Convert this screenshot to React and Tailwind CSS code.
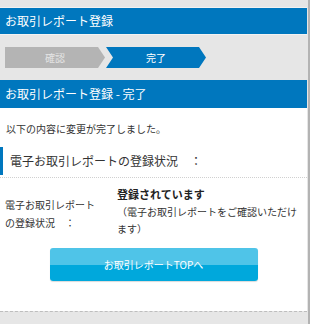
import React from "react";

const BLUE = "bg-[#0077be]";

function Steps() {
  return (
    <div className="flex items-center h-[45px] pl-[5px]">
      <div className="w-[100px] h-[21px] bg-[#b4b4b4] text-[#e4e4e4] text-[10px] flex items-center justify-center [clip-path:polygon(0_0,93px_0,100%_50%,93px_100%,0_100%)]">
        確認
      </div>
      <div className="ml-px w-[100px] h-[21px] bg-[#0077be] text-white text-[10px] flex items-center justify-center [clip-path:polygon(0_0,93px_0,100%_50%,93px_100%,0_100%,7px_50%)]">
        完了
      </div>
    </div>
  );
}

export default function App() {
  return (
    <div className="w-[310px] h-[324px] bg-[#e6e6e6] flex overflow-hidden font-['Noto_Sans_CJK_JP','Noto_Sans',sans-serif] text-[#333]">
      <div className="w-[307px] flex flex-col">
        <div className="h-[7px]" />
        <div className={`h-[28px] border-y border-[#f2f2f2] ${BLUE} text-white text-[12px] pl-[5px] flex items-center`}>
          お取引レポート登録
        </div>
        <Steps />
        <div className={`h-[28px] ${BLUE} text-white text-[12px] pl-[5px] flex items-center`}>
          お取引レポート登録 - 完了
        </div>

        <div className="bg-white h-[203px] flex flex-col">
          <p className="pt-[13px] pl-[6px] text-[10px] leading-[16px]">以下の内容に変更が完了しました。</p>

          <div className="mt-[10px] pb-[2px] border-b border-dotted border-[#d0d0d0]">
            <div className="h-[28px] border-l-[3px] border-[#0077be] pl-[7px] flex items-center text-[12px]">
              電子お取引レポートの登録状況　：
            </div>
          </div>

          <div className="flex items-start">
            <div className="w-[112px] ml-[5px] pt-[18px] text-[10px] leading-[18px]">
              電子お取引レポート
              <br />
              の登録状況　：
            </div>
            <div className="w-[184px] pt-[8px] text-[10px] leading-[17px]">
              <div className="text-[11px] font-bold text-[#222]">登録されています</div>
              <div>（電子お取引レポートをご確認いただけます）</div>
            </div>
          </div>

          <button className="mt-[11px] mx-auto w-[208px] h-[33px] rounded-[3px] bg-[linear-gradient(#4fc4e8_50%,#00a8dc_50%)] text-white text-[10px] shadow-[0_1px_1px_rgba(0,0,0,0.15)]">
            お取引レポートTOPへ
          </button>
        </div>

        <div className="flex-1 border-t border-dashed border-[#bdbdbd]" />
      </div>
      <div className="w-px" />
      <div className="w-[2px] bg-[#b3b3b3]" />
    </div>
  );
}
